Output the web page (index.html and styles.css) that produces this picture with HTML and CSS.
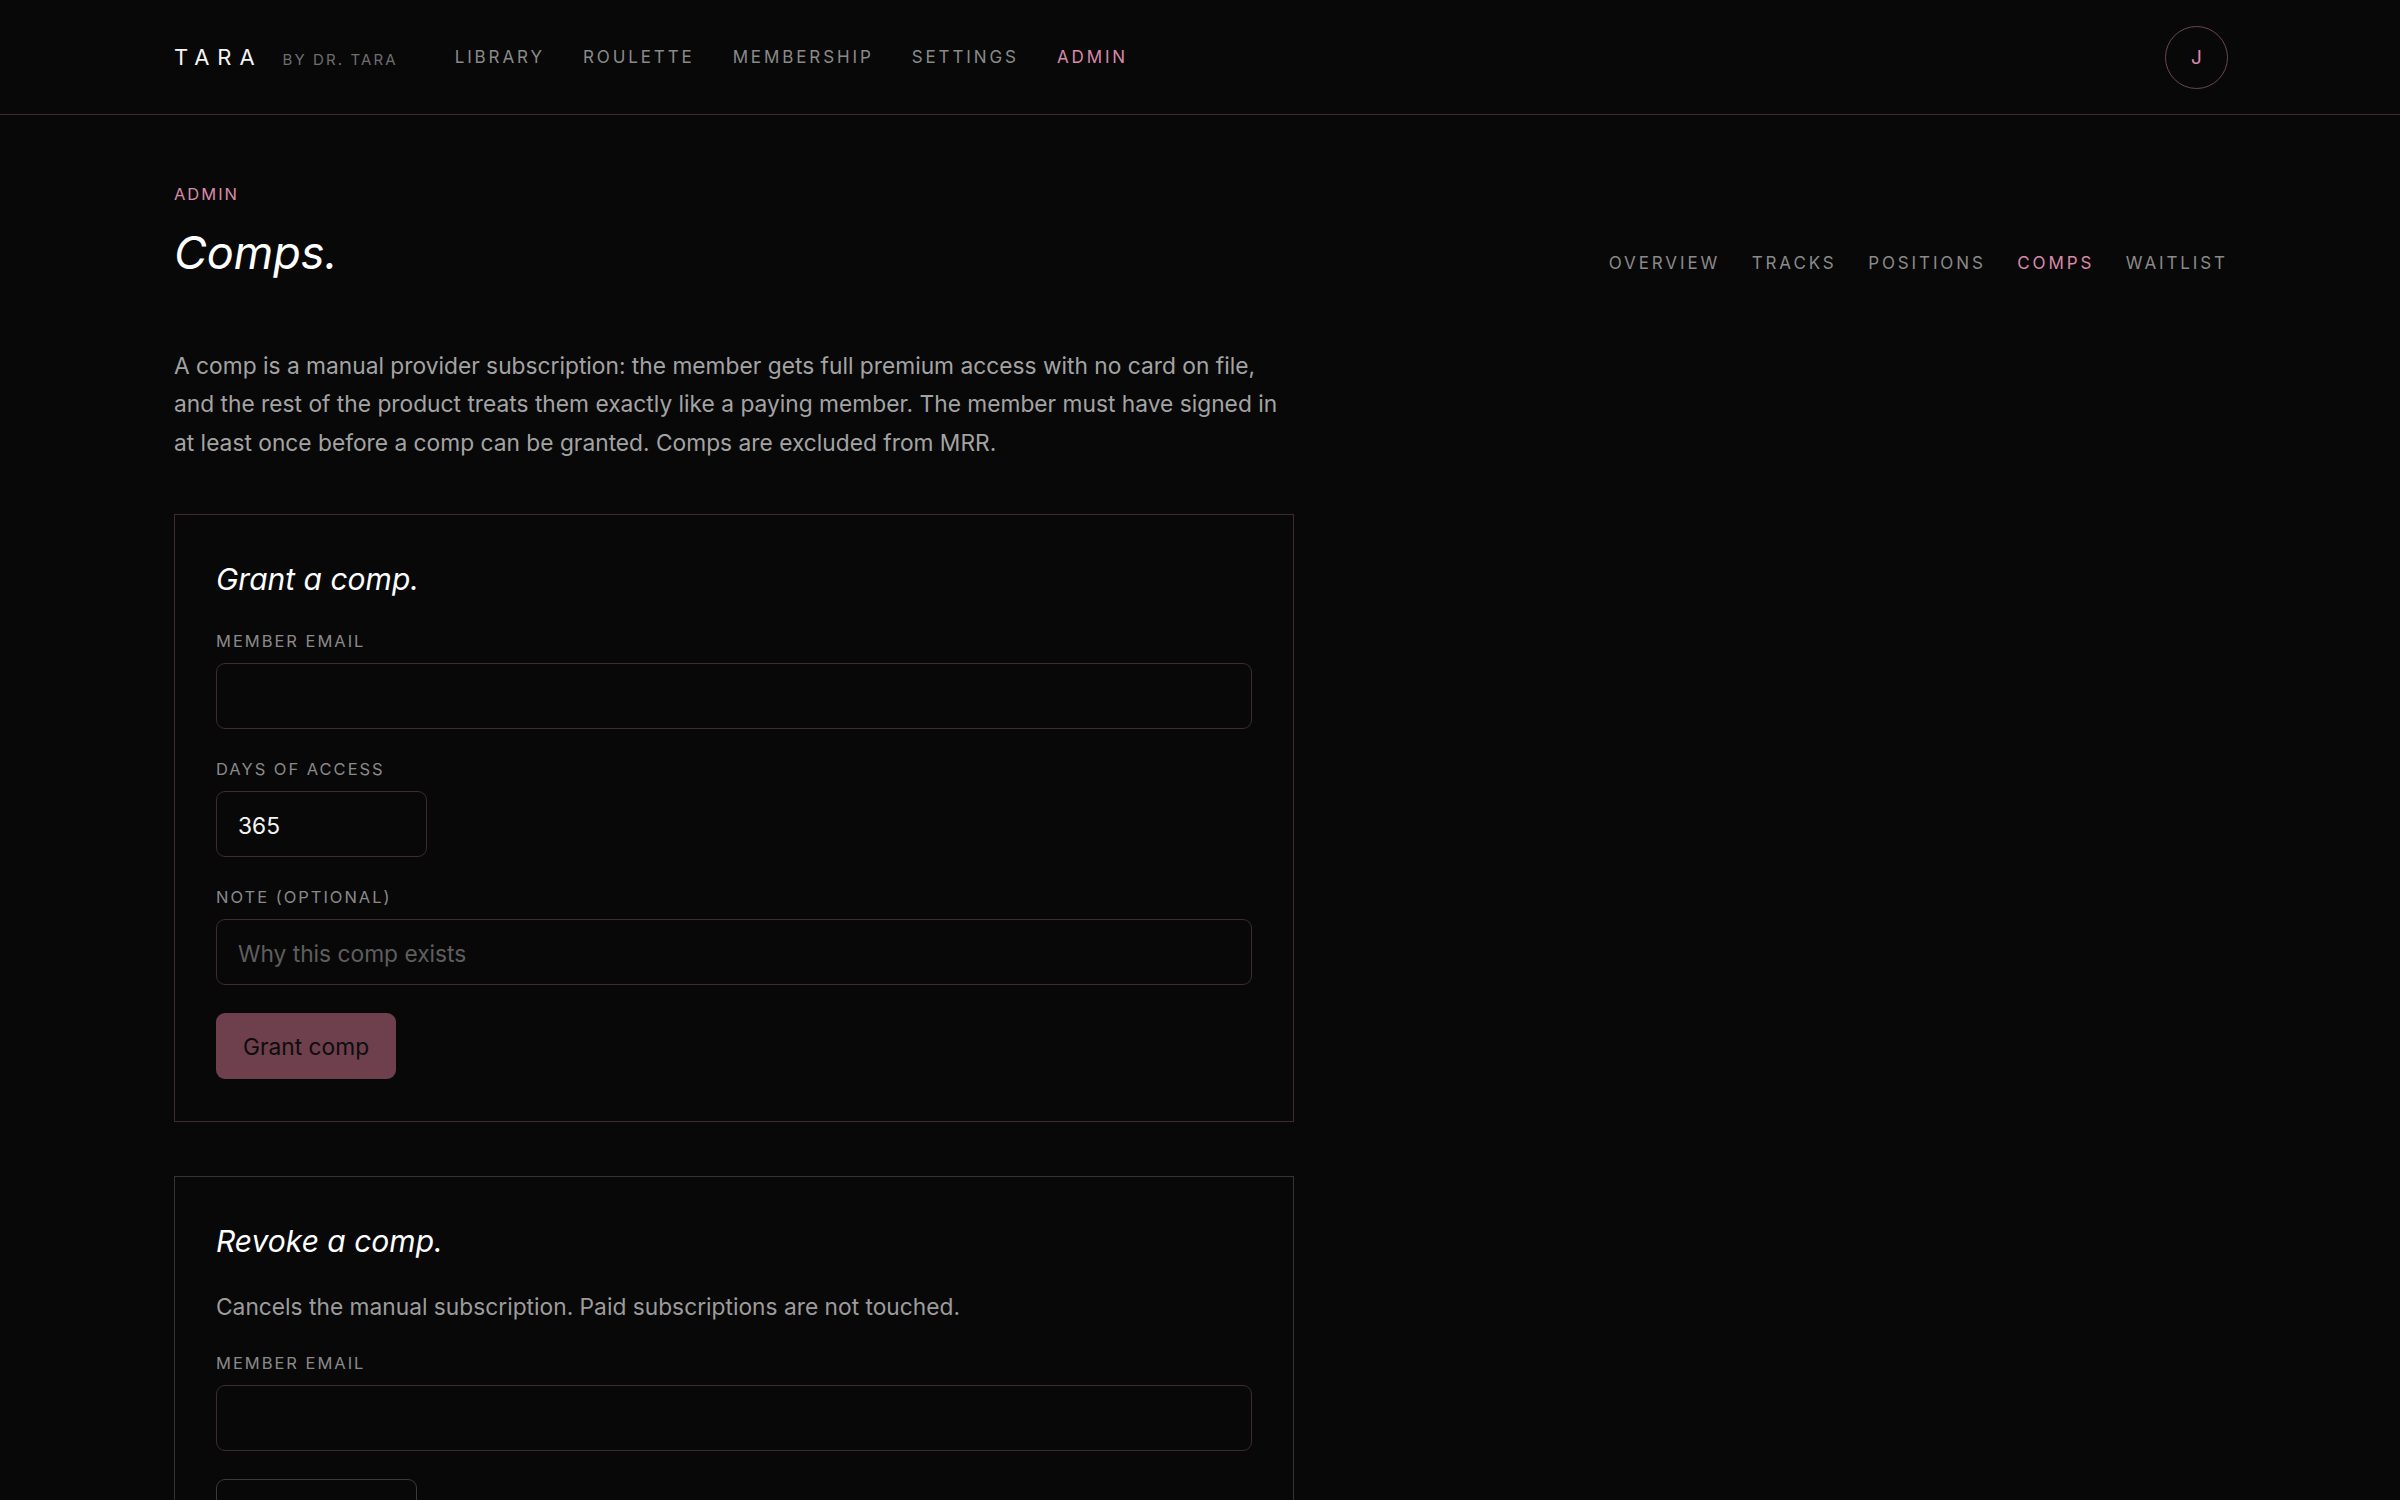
FILE: index.html
```html
<!DOCTYPE html>
<html lang="en">
<head>
    <meta charset="UTF-8">
    <meta name="viewport" content="width=device-width, initial-scale=1.0">
    <title>Comps · Admin · Tara</title>
    <link rel="stylesheet" href="styles.css">
</head>
<body>

    <header class="topbar">
        <div class="topbar-inner">
            <div class="brand">
                <span class="brand-name">TARA</span>
                <span class="brand-by">BY DR. TARA</span>
            </div>
            <nav class="main-nav">
                <a href="#">Library</a>
                <a href="#">Roulette</a>
                <a href="#">Membership</a>
                <a href="#">Settings</a>
                <a href="#" class="active">Admin</a>
            </nav>
            <div class="avatar">J</div>
        </div>
    </header>

    <main class="page">
        <div class="page-head">
            <div>
                <div class="eyebrow">Admin</div>
                <h1>Comps.</h1>
            </div>
            <nav class="sub-nav">
                <a href="#">Overview</a>
                <a href="#">Tracks</a>
                <a href="#">Positions</a>
                <a href="#" class="active">Comps</a>
                <a href="#">Waitlist</a>
            </nav>
        </div>

        <div class="column">
            <p class="intro">A comp is a manual provider subscription: the member gets full premium access with no card on file, and the rest of the product treats them exactly like a paying member. The member must have signed in at least once before a comp can be granted. Comps are excluded from MRR.</p>

            <section class="card">
                <h2>Grant a comp.</h2>
                <form class="form">
                    <label class="field">
                        <span class="field-label">Member email</span>
                        <input type="email">
                    </label>
                    <label class="field">
                        <span class="field-label">Days of access</span>
                        <input type="text" class="short" value="365">
                    </label>
                    <label class="field">
                        <span class="field-label">Note (optional)</span>
                        <input type="text" placeholder="Why this comp exists">
                    </label>
                    <div><button type="button" class="btn btn-primary">Grant comp</button></div>
                </form>
            </section>

            <section class="card card-muted">
                <h2>Revoke a comp.</h2>
                <p class="card-desc">Cancels the manual subscription. Paid subscriptions are not touched.</p>
                <form class="form">
                    <label class="field">
                        <span class="field-label">Member email</span>
                        <input type="email">
                    </label>
                    <div><button type="button" class="btn btn-outline">Revoke comp</button></div>
                </form>
            </section>
        </div>
    </main>

</body>
</html>
```

FILE: styles.css
```css
body {
    margin: 0;
    background-color: #080808;
    color: #f2f2f2;
    font-family: 'Inter', 'Liberation Sans', sans-serif;
    font-size: 22.75px;
}

a {
    text-decoration: none;
}

/* Header */
.topbar {
    border-bottom: 1px solid #3d2a32;
}

.topbar-inner {
    display: flex;
    align-items: center;
    height: 114px;
    padding: 0 172px 0 174px;
}

.brand {
    display: flex;
    align-items: baseline;
    gap: 20px;
}

.brand-name {
    font-size: 22px;
    letter-spacing: 0.36em;
    color: #f4f4f4;
}

.brand-by {
    font-size: 15px;
    letter-spacing: 0.14em;
    color: #6e6e6e;
}

.main-nav {
    display: flex;
    gap: 38px;
    margin-left: 57px;
}

.main-nav a,
.sub-nav a {
    font-size: 17px;
    letter-spacing: 0.17em;
    text-transform: uppercase;
    color: #8a8a8a;
}

.main-nav a.active,
.sub-nav a.active {
    color: #d98aa8;
}

.avatar {
    margin-left: auto;
    width: 61px;
    height: 61px;
    border: 1px solid #6a4653;
    border-radius: 50%;
    display: flex;
    align-items: center;
    justify-content: center;
    font-size: 19px;
    color: #d98aa8;
}

/* Page */
.page {
    padding: 67px 172px 60px 174px;
}

.page-head {
    display: flex;
    justify-content: space-between;
    align-items: flex-end;
}

.eyebrow {
    font-size: 16.5px;
    line-height: 24px;
    letter-spacing: 0.12em;
    text-transform: uppercase;
    color: #d98aa8;
}

h1 {
    margin: 20px 0 0;
    font-size: 45px;
    line-height: 54px;
    font-weight: 400;
    font-style: italic;
    color: #ffffff;
}

.sub-nav {
    display: flex;
    gap: 31.5px;
    margin-bottom: 7px;
}

.column {
    max-width: 1120px;
}

.intro {
    margin: 67px 0 52px;
    line-height: 38.4px;
    color: #a3a3a3;
}

/* Cards */
.card {
    border: 1px solid #3d2a32;
    padding: 45px 41px 42px;
    margin-bottom: 54px;
}

.card-muted {
    border-color: #343434;
}

.card h2 {
    margin: 0 0 30px;
    font-size: 30px;
    line-height: 39px;
    font-weight: 400;
    font-style: italic;
    color: #ffffff;
}

.card-desc {
    margin: -3px 0 24px;
    line-height: 38.4px;
    color: #9c9c9c;
}

.form {
    display: flex;
    flex-direction: column;
    gap: 28px;
}

.field {
    display: flex;
    flex-direction: column;
    gap: 10px;
}

.field-label {
    font-size: 16.5px;
    line-height: 24px;
    letter-spacing: 0.12em;
    text-transform: uppercase;
    color: #8a8a8a;
}

input {
    box-sizing: border-box;
    width: 100%;
    height: 66px;
    padding: 3px 21px 0;
    background-color: #080808;
    border: 1.5px solid #3e2a32;
    border-radius: 9px;
    color: #f4f4f4;
    font-family: inherit;
    font-size: 22.75px;
    outline: none;
}

input.short {
    width: 211px;
}

input::placeholder {
    color: #5e5e5e;
}

.btn {
    height: 66px;
    padding: 0 27px;
    border-radius: 9px;
    font-family: inherit;
    font-size: 22.75px;
    cursor: pointer;
}

.btn-primary {
    background-color: #6e3f4c;
    border: none;
    color: #0d0d0d;
}

.btn-outline {
    background: transparent;
    border: 1.5px solid #3a3a3a;
    color: #cfcfcf;
}
```
